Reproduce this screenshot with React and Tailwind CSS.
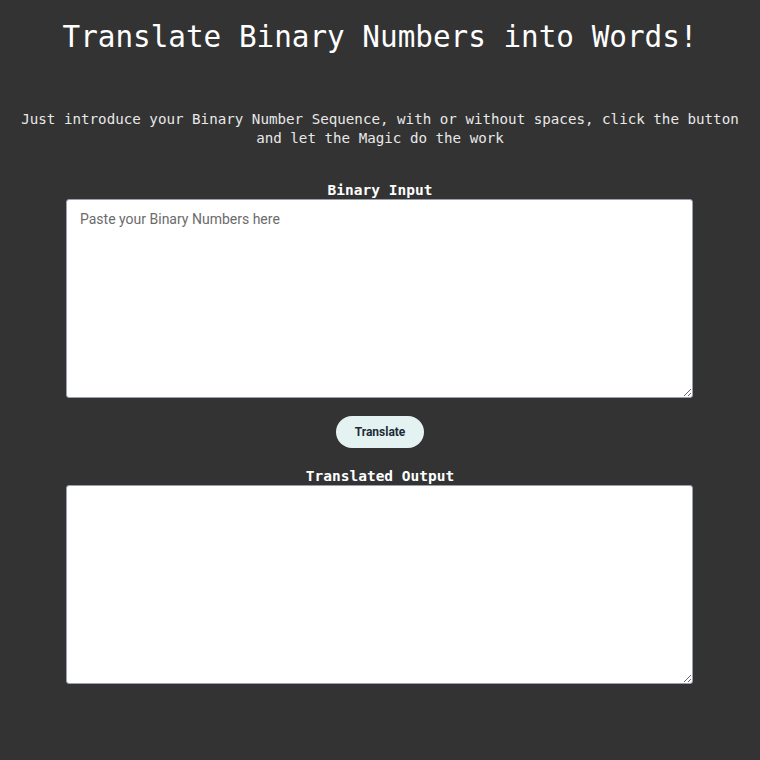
import React, { useState } from 'react';

const App = () => {
  const [input, setInput] = useState('');
  const [output, setOutput] = useState('');

  // 8 bits per char, anything that isn't 0/1 is dropped
  const translate = () => {
    const bits = input.replace(/[^01]/g, '');
    let text = '';
    for (let i = 0; i + 8 <= bits.length; i += 8) {
      text += String.fromCharCode(parseInt(bits.slice(i, i + 8), 2));
    }
    setOutput(text);
  };

  return (
    <div className="min-h-[760px] bg-[#333333] text-[#f5f5f5] flex flex-col items-center font-['DejaVu_Sans_Mono','Liberation_Mono',monospace]">
      <h1 className="mt-[17px] text-[29.3px] leading-[40px] text-white">
        Translate Binary Numbers into Words!
      </h1>

      <p className="mt-[53px] px-4 text-center text-[14.2px] leading-[19px] text-[#e8e8e8]">
        Just introduce your Binary Number Sequence, with or without spaces, click the button
        <br />
        and let the Magic do the work
      </p>

      <label className="mt-[33px] text-[14.5px] leading-[18px] font-bold text-white">
        Binary Input
      </label>
      <textarea
        value={input}
        onChange={e => setInput(e.target.value)}
        placeholder="Paste your Binary Numbers here"
        className="w-[627px] mr-[1px] h-[199px] bg-white border border-gray-400 rounded-[3px] px-[13px] py-[9px] text-[14px] text-gray-800 placeholder:text-[#6b6b6b] resize-y outline-none font-['Roboto','Liberation_Sans',sans-serif]"
      />

      <button
        onClick={translate}
        className="mt-[18px] w-[88px] h-[32px] rounded-full bg-[#e4f3f2] text-[12px] font-bold text-[#1f2937] font-['Roboto','Liberation_Sans',sans-serif]"
      >
        Translate
      </button>

      <label className="mt-[19px] text-[14.5px] leading-[18px] font-bold text-white">
        Translated Output
      </label>
      <textarea
        value={output}
        readOnly
        className="w-[627px] mr-[1px] h-[199px] bg-white border border-gray-400 rounded-[3px] px-[13px] py-[9px] text-[14px] text-gray-800 resize-y outline-none font-['Roboto','Liberation_Sans',sans-serif]"
      />
    </div>
  );
};

export default App;
